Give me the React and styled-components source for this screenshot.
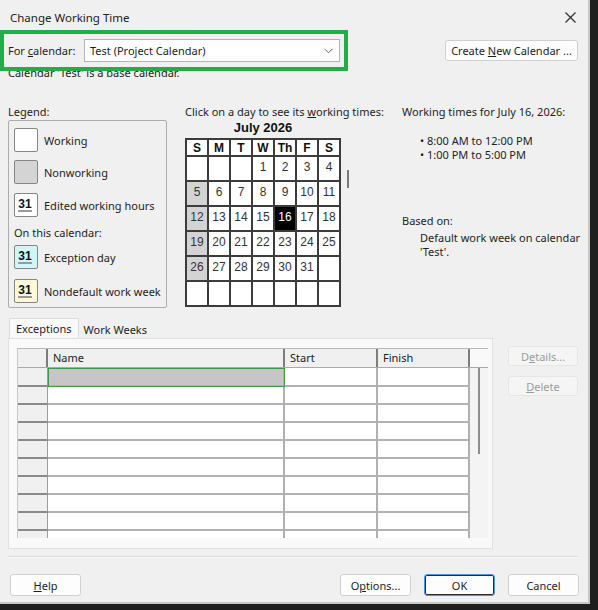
import styled, { createGlobalStyle } from "styled-components";

const GlobalStyle = createGlobalStyle`
  html, body { margin: 0; padding: 0; background: #1f1f1f; }
  body {
    font-family: "Noto Sans", "Open Sans", sans-serif;
    font-size: 11px;
    color: #1e1e1e;
  }
  * { box-sizing: border-box; }
`;

const Dialog = styled.div`
  width: 590px;
  height: 604px;
  background: #f0f0f0;
  border-right: 2px solid #c6c6c6;
  border-bottom: 2px solid #c6c6c6;
  display: flex;
  flex-direction: column;
  overflow: hidden;
`;

const TitleBar = styled.div`
  height: 30px;
  padding: 4px 12px 0 10px;
  display: flex;
  align-items: center;
  justify-content: space-between;
  font-size: 11.5px;
  color: #222;
`;

const CloseIcon = () => (
  <svg width="11" height="11" viewBox="0 0 11 11">
    <path d="M0.5 0.5 L10.5 10.5 M10.5 0.5 L0.5 10.5" stroke="#333" strokeWidth="1.3" />
  </svg>
);

const CalendarBar = styled.div`
  height: 41px;
  display: flex;
  align-items: center;
  justify-content: space-between;
`;

const Highlight = styled.div`
  position: relative;
  z-index: 1;
  width: 348px;
  height: 41px;
  border: 4px solid #1fae4b;
  display: flex;
  align-items: center;
  justify-content: space-between;
  padding: 0 4px 0 4px;
`;

const Select = styled.div`
  width: 256px;
  height: 23px;
  background: #fff;
  border: 1px solid #b4b4b4;
  display: flex;
  align-items: center;
  justify-content: space-between;
  padding: 0 6px 0 5px;
`;

const Button = styled.div`
  width: ${(p) => p.$w || 71}px;
  height: ${(p) => p.$h || 22}px;
  background: ${(p) => (p.$disabled ? "#f5f5f5" : "#fdfdfd")};
  border: 1px solid ${(p) => (p.$disabled ? "#e6e6e6" : p.$primary ? "#4a95de" : "#d0d0d0")};
  box-shadow: ${(p) => (p.$primary ? "inset 0 0 0 1px #2b2b2b" : "none")};
  border-radius: 3px;
  display: flex;
  align-items: center;
  justify-content: center;
  color: ${(p) => (p.$disabled ? "#9c9c9c" : "#1e1e1e")};
`;

const CreateButton = styled(Button)`
  margin-right: 10px;
`;

const U = styled.span`
  text-decoration: underline;
`;

const Note = styled.div`
  margin-top: -4px;
  height: 12px;
  line-height: 12px;
  padding-left: 8px;
`;

const Main = styled.div`
  margin-top: 26px;
  display: flex;
  align-items: flex-start;
`;

const Heading = styled.div`
  height: 14px;
  line-height: 14px;
  white-space: nowrap;
`;

const LegendCol = styled.div`
  margin-left: 8px;
  width: 159px;
`;

const LegendBox = styled.div`
  margin-top: 1px;
  height: 188px;
  border: 1px solid #adadad;
  border-radius: 2px;
  padding: 7px 0 0 5px;
`;

const LegendItem = styled.div`
  display: flex;
  align-items: center;
  gap: 6px;
  white-space: nowrap;
  margin-top: ${(p) => p.$top ?? 8}px;
`;

const Swatch = styled.div`
  flex: none;
  width: 24px;
  height: 24px;
  border: 1px solid #868686;
  border-radius: 2px;
  background: ${(p) => p.$bg};
  display: flex;
  align-items: center;
  justify-content: center;
  font-family: "Liberation Sans", Arial, sans-serif;
  font-weight: bold;
  font-size: 12px;
  color: #111;
  padding-right: 2px;

  span {
    border-bottom: 2px solid #9a9a9a;
    line-height: 11px;
  }
`;

const SubHeading = styled.div`
  margin-top: 9px;
  margin-bottom: -3px;
  height: 14px;
  line-height: 14px;
`;

const CalCol = styled.div`
  margin-left: 18px;
  width: 165px;
`;

const Month = styled.div`
  margin-top: 1px;
  width: 156px;
  height: 16px;
  line-height: 16px;
  text-align: center;
  font-family: "Liberation Sans", Arial, sans-serif;
  font-weight: bold;
  font-size: 13px;
  color: #111;
`;

const CalWrap = styled.div`
  margin-top: 2px;
  display: flex;
  align-items: flex-start;
`;

const CalGrid = styled.div`
  display: grid;
  grid-template-columns: repeat(7, 20px);
  grid-template-rows: 15px repeat(6, 23px);
  gap: 2px;
  background: #3c3c3c;
  border: 2px solid #3c3c3c;
  font-family: "Liberation Sans", Arial, sans-serif;
  font-size: 12px;
`;

const DayHead = styled.div`
  background: #fff;
  display: flex;
  align-items: center;
  justify-content: center;
  font-weight: bold;
  color: #111;
`;

const Day = styled.div`
  background: ${(p) => (p.$sel ? "#000" : p.$off ? "#d3d3d3" : "#fff")};
  color: ${(p) => (p.$sel ? "#fff" : "#333")};
  display: flex;
  align-items: center;
  justify-content: center;
  padding-bottom: 3px;
`;

const ScrollThumb = styled.div`
  margin: 32px 0 0 6px;
  width: 2px;
  height: 18px;
  background: #7a7a7a;
`;

const InfoCol = styled.div`
  margin-left: 52px;
`;

const Line = styled.div`
  height: 14px;
  line-height: 14px;
  margin-top: ${(p) => p.$top || 0}px;
  padding-left: ${(p) => p.$indent || 0}px;
  white-space: nowrap;
`;

const TabRow = styled.div`
  margin-top: 10px;
  padding-left: 9px;
  display: flex;
  align-items: flex-end;
  height: 20px;
`;

const Tab = styled.div`
  height: ${(p) => (p.$active ? 20 : 18)}px;
  padding: 0 6px 0 7px;
  display: flex;
  align-items: center;
  background: ${(p) => (p.$active ? "#f9f9f9" : "#f0f0f0")};
  border: 1px solid ${(p) => (p.$active ? "#dcdcdc" : "transparent")};
  border-bottom: none;
  margin-left: ${(p) => (p.$active ? 0 : 2)}px;
  padding-left: ${(p) => (p.$active ? 6 : 2)}px;
`;

const PanelRow = styled.div`
  display: flex;
  align-items: flex-start;
`;

const Panel = styled.div`
  margin-left: 8px;
  width: 485px;
  height: 211px;
  background: #f9f9f9;
  border: 1px solid #e0e0e0;
  padding: 9px 0 0 8px;
`;

const SideButtons = styled.div`
  margin: 8px 0 0 15px;
  display: flex;
  flex-direction: column;
  gap: 10px;
`;

const cols = "30px 237px 93px 92px 19px";

const Table = styled.div`
  width: 471px;
  height: 190px;
  overflow: hidden;
  display: flex;
  flex-direction: column;
  border-top: 1px solid #b9b9b9;
  border-left: 1px solid #c9c9c9;
  position: relative;
`;

const HeadRow = styled.div`
  display: grid;
  grid-template-columns: ${cols};
  height: 19px;
  flex: none;
  background: #f0f0f0;
  border-bottom: 1px solid #a9a9a9;
`;

const HeadCell = styled.div`
  border-right: ${(p) => (p.$last ? "none" : "2px solid #7d7d7d")};
  padding-left: 5px;
  line-height: 18px;
  color: #222;
  background: ${(p) => (p.$last ? "#f9f9f9" : "#f0f0f0")};
`;

const Row = styled.div`
  display: grid;
  grid-template-columns: ${cols};
  height: ${(p) => p.$h || 18}px;
  flex: none;
`;

const RowHead = styled.div`
  background: #f0f0f0;
  border-bottom: 2px solid #8a8a8a;
  border-right: 1px solid #9d9d9d;
`;

const Cell = styled.div`
  background: ${(p) => (p.$sel ? "#c6c6c6" : "#fff")};
  border-bottom: 2px solid #b3b3b3;
  border-right: 2px solid #b0b0b0;
  outline: ${(p) => (p.$sel ? "1px solid #3f9a46" : "none")};
  outline-offset: -1px;
`;

const Lane = styled.div`
  background: #f4f4f4;
`;

const LaneLine = styled.div`
  position: absolute;
  left: 460px;
  top: 19px;
  width: 2px;
  height: 86px;
  background: #8c8c8c;
`;

const Separator = styled.div`
  margin: 7px 10px 0 8px;
  height: 2px;
  border-top: 1px solid #d9d9d9;
  border-bottom: 1px solid #fbfbfb;
`;

const Footer = styled.div`
  margin-top: 16px;
  padding: 0 9px 0 10px;
  display: flex;
  justify-content: space-between;
`;

const FooterRight = styled.div`
  display: flex;
  gap: 13px;
`;

const Chevron = () => (
  <svg width="9" height="6" viewBox="0 0 9 6">
    <path d="M0.5 0.8 L4.5 4.8 L8.5 0.8" fill="none" stroke="#666" strokeWidth="1" />
  </svg>
);

const weeks = [
  ["", "", "", "1", "2", "3", "4"],
  ["5", "6", "7", "8", "9", "10", "11"],
  ["12", "13", "14", "15", "16", "17", "18"],
  ["19", "20", "21", "22", "23", "24", "25"],
  ["26", "27", "28", "29", "30", "31", ""],
  ["", "", "", "", "", "", ""],
];

const App = () => {
  return (
    <>
      <GlobalStyle />
      <Dialog>
        <TitleBar>
          <span>Change Working Time</span>
          <CloseIcon />
        </TitleBar>

        <CalendarBar>
          <Highlight>
            <span>For <U>c</U>alendar:</span>
            <Select>
              <span>Test (Project Calendar)</span>
              <Chevron />
            </Select>
          </Highlight>
          <CreateButton $w={133} $h={21}>
            <span>Create <U>N</U>ew Calendar ...</span>
          </CreateButton>
        </CalendarBar>
        <Note>Calendar 'Test' is a base calendar.</Note>

        <Main>
          <LegendCol>
            <Heading>Legend:</Heading>
            <LegendBox>
              <LegendItem $top={0}>
                <Swatch $bg="#fff" />
                Working
              </LegendItem>
              <LegendItem>
                <Swatch $bg="#d4d4d4" />
                Nonworking
              </LegendItem>
              <LegendItem $top={9}>
                <Swatch $bg="#fff"><span>31</span></Swatch>
                Edited working hours
              </LegendItem>
              <SubHeading>On this calendar:</SubHeading>
              <LegendItem>
                <Swatch $bg="#cff6f8"><span>31</span></Swatch>
                Exception day
              </LegendItem>
              <LegendItem $top={10}>
                <Swatch $bg="#fdf9d8"><span>31</span></Swatch>
                Nondefault work week
              </LegendItem>
            </LegendBox>
          </LegendCol>

          <CalCol>
            <Heading>Click on a day to see its <U>w</U>orking times:</Heading>
            <Month>July 2026</Month>
            <CalWrap>
              <CalGrid>
                {["S", "M", "T", "W", "Th", "F", "S"].map((d, i) => (
                  <DayHead key={i}>{d}</DayHead>
                ))}
                {weeks.map((w, r) =>
                  w.map((d, c) => (
                    <Day key={`${r}-${c}`} $off={c === 0 && d !== ""} $sel={d === "16"}>
                      {d}
                    </Day>
                  ))
                )}
              </CalGrid>
              <ScrollThumb />
            </CalWrap>
          </CalCol>

          <InfoCol>
            <Heading>Working times for July 16, 2026:</Heading>
            <Line $top={15} $indent={18}>• 8:00 AM to 12:00 PM</Line>
            <Line $indent={18}>• 1:00 PM to 5:00 PM</Line>
            <Line $top={52}>Based on:</Line>
            <Line $top={3} $indent={18}>Default work week on calendar</Line>
            <Line $indent={18}>'Test'.</Line>
          </InfoCol>
        </Main>

        <TabRow>
          <Tab $active>Exceptions</Tab>
          <Tab>Work Weeks</Tab>
        </TabRow>
        <PanelRow>
          <Panel>
            <Table>
              <HeadRow>
                <HeadCell />
                <HeadCell>Name</HeadCell>
                <HeadCell>Start</HeadCell>
                <HeadCell>Finish</HeadCell>
                <HeadCell $last />
              </HeadRow>
              {Array.from({ length: 10 }).map((_, i) => (
                <Row key={i} $h={i === 0 ? 19 : 18}>
                  <RowHead />
                  <Cell $sel={i === 0} />
                  <Cell />
                  <Cell />
                  <Lane />
                </Row>
              ))}
              <LaneLine />
            </Table>
          </Panel>
          <SideButtons>
            <Button $w={70} $h={20} $disabled>
              <span>D<U>e</U>tails...</span>
            </Button>
            <Button $w={70} $h={20} $disabled>
              <span><U>D</U>elete</span>
            </Button>
          </SideButtons>
        </PanelRow>

        <Separator />
        <Footer>
          <Button>
            <span><U>H</U>elp</span>
          </Button>
          <FooterRight>
            <Button>
              <span>O<U>p</U>tions...</span>
            </Button>
            <Button $primary>OK</Button>
            <Button>Cancel</Button>
          </FooterRight>
        </Footer>
      </Dialog>
    </>
  );
};

export default App;
